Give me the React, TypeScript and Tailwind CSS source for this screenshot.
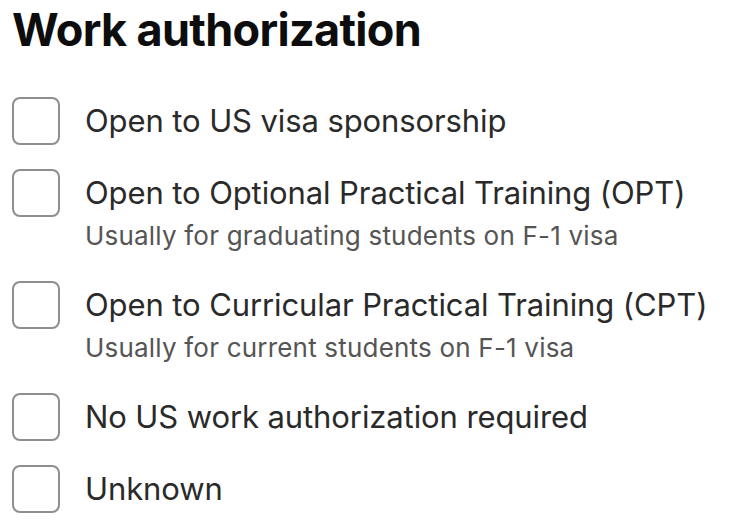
import React from 'react'

type Option = { label: string; hint?: string }

const options: Option[] = [
  { label: 'Open to US visa sponsorship' },
  { label: 'Open to Optional Practical Training (OPT)', hint: 'Usually for graduating students on F-1 visa' },
  { label: 'Open to Curricular Practical Training (CPT)', hint: 'Usually for current students on F-1 visa' },
  { label: 'No US work authorization required' },
  { label: 'Unknown' },
]

export default function App() {
  return (
    <div className="w-[732px] h-[528px] bg-white overflow-hidden pl-3 pt-[3px]" style={{ fontFamily: 'Inter, "Noto Sans", sans-serif' }}>
      <h1 className="text-[45px] leading-[54px] font-bold text-[#0d0d0d] tracking-[-0.015em]">Work authorization</h1>
      <div className="mt-[40px] flex flex-col gap-[24px]">
        {options.map(o => (
          <label key={o.label} className="flex items-start gap-[25px]">
            <span className="w-12 h-12 shrink-0 rounded-[8px] border-2 border-[#8e8e8e] bg-white" />
            <span className="flex flex-col">
              <span className="text-[31px] leading-[48px] text-[#2a2a2a] tracking-[-0.1px]">{o.label}</span>
              {o.hint && <span className="text-[26px] leading-[38px] text-[#555555] tracking-[0.2px] mb-[2px]">{o.hint}</span>}
            </span>
          </label>
        ))}
      </div>
    </div>
  )
}
